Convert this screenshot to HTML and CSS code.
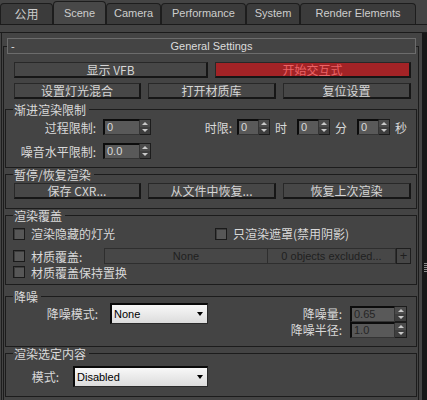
FILE: index.html
```html
<!DOCTYPE html>
<html>
<head>
<meta charset="utf-8">
<link rel="stylesheet" href="styles.css">
</head>
<body>
<div class="tabs">
  <div class="tab tab-common cjk">公用</div>
  <div class="tab tab-scene active">Scene</div>
  <div class="tab tab-camera">Camera</div>
  <div class="tab tab-perf">Performance</div>
  <div class="tab tab-system">System</div>
  <div class="tab tab-re">Render Elements</div>
</div>
<div class="panel">
  <div class="scroll">
    <div class="rollout">
      <div class="rollout-head"><span class="minus">-</span><span class="rollout-title">General Settings</span><span></span></div>
      <div class="rollout-body">
        <div class="btn-row btn-row-2">
          <div class="btn">显示 VFB</div>
          <div class="btn btn-red">开始交互式</div>
        </div>
        <div class="btn-row btn-row-3">
          <div class="btn">设置灯光混合</div>
          <div class="btn">打开材质库</div>
          <div class="btn">复位设置</div>
        </div>

        <fieldset class="group group-progressive">
          <legend>渐进渲染限制</legend>
          <div class="row">
            <span class="lbl-main">过程限制:</span>
            <div class="spin spin-pass"><span class="spin-field">0</span><span class="spin-btn"></span></div>
            <span class="lbl-time">时限:</span>
            <div class="spin spin-time"><span class="spin-field">0</span><span class="spin-btn"></span></div>
            <span class="unit">时</span>
            <div class="spin spin-time"><span class="spin-field">0</span><span class="spin-btn"></span></div>
            <span class="unit">分</span>
            <div class="spin spin-time"><span class="spin-field">0</span><span class="spin-btn"></span></div>
            <span class="unit unit-last">秒</span>
          </div>
          <div class="row">
            <span class="lbl-main">噪音水平限制:</span>
            <div class="spin spin-pass"><span class="spin-field">0.0</span><span class="spin-btn"></span></div>
          </div>
        </fieldset>

        <fieldset class="group group-pause">
          <legend>暂停/恢复渲染</legend>
          <div class="btn-row btn-row-3 in-group">
            <div class="btn">保存 CXR...</div>
            <div class="btn">从文件中恢复...</div>
            <div class="btn">恢复上次渲染</div>
          </div>
        </fieldset>

        <fieldset class="group group-override">
          <legend>渲染覆盖</legend>
          <div class="ov-row ov-row1">
            <label class="check"><span class="cb"></span><span>渲染隐藏的灯光</span></label>
            <label class="check"><span class="cb"></span><span>只渲染遮罩(禁用阴影)</span></label>
          </div>
          <div class="ov-row ov-row2">
            <label class="check"><span class="cb"></span><span class="ov-label">材质覆盖:</span></label>
            <div class="field field-none">None</div>
            <div class="field field-excl">0 objects excluded...</div>
            <div class="field field-plus">+</div>
          </div>
          <div class="ov-row">
            <label class="check"><span class="cb"></span><span>材质覆盖保持置换</span></label>
          </div>
        </fieldset>

        <fieldset class="group group-denoise">
          <legend>降噪</legend>
          <div class="denoise">
            <div class="dn-left">
              <span class="dn-label">降噪模式:</span>
              <div class="dropdown dd-denoise"><span>None</span></div>
            </div>
            <div class="dn-spins">
              <span class="dn-spin-label">降噪量:</span>
              <div class="spin spin-dn"><span class="spin-field disabled">0.65</span><span class="spin-btn"></span></div>
              <span class="dn-spin-label">降噪半径:</span>
              <div class="spin spin-dn"><span class="spin-field disabled">1.0</span><span class="spin-btn"></span></div>
            </div>
          </div>
        </fieldset>

        <fieldset class="group group-select">
          <legend>渲染选定内容</legend>
          <div class="sel-row">
            <span class="sel-label">模式:</span>
            <div class="dropdown dd-select"><span>Disabled</span></div>
          </div>
        </fieldset>
      </div>
    </div>
  </div>
  <div class="scrollbar"><div class="grip"></div></div>
</div>
</body>
</html>
```

FILE: styles.css
```css
* { box-sizing: border-box; }

body {
  margin: 0;
  width: 427px;
  height: 400px;
  overflow: hidden;
  background: #444444;
  color: #d9d9d9;
  font-family: "Noto Sans CJK SC", "Liberation Sans", sans-serif;
  font-size: 12px;
}

/* ---------- tabs ---------- */
.tabs {
  display: flex;
  align-items: flex-end;
  height: 25px;
  border-bottom: 1px solid #1b1b1b;
}
.tab {
  height: 21px;
  border: 1px solid #1d1d1d;
  border-bottom: 0;
  border-radius: 4px 4px 0 0;
  background: #3b3b3b;
  color: #cdcdcd;
  font: 11px/19px "Liberation Sans", sans-serif;
  text-align: center;
}
.tab.cjk { font: 12px/19px "Noto Sans CJK SC", sans-serif; }
.tab.active {
  height: 23px;
  padding-top: 2px;
  background: #484848;
}
.tab-common { width: 53px; }
.tab-scene { width: 53px; }
.tab-camera { width: 55px; }
.tab-perf { width: 85px; }
.tab-system { width: 54px; }
.tab-re { width: 116px; }

/* ---------- panel ---------- */
.panel {
  display: flex;
  margin-top: 7px;
  height: 368px;
  padding-left: 1px;
  border-top: 1px solid #1b1b1b;
}
.scroll {
  flex: 1;
  overflow: hidden;
  border-left: 1px solid #1e1e1e;
  padding-left: 1px;
}
.scrollbar {
  width: 5px;
  background: #171717;
}
.grip {
  width: 3px;
  height: 10px;
  margin: 230px 0 0 2px;
  background: repeating-linear-gradient(to bottom, #8a8a8a 0 1px, transparent 1px 2px);
}

/* ---------- rollout ---------- */
.rollout {
  width: 416px;
  padding-top: 5px;
}
.rollout-head {
  position: relative;
  z-index: 1;
  display: grid;
  grid-template-columns: 1fr auto 1fr;
  height: 16px;
  margin: 0 3px 0 4px;
  border: 1px solid #6c6c6c;
  background: #444444;
  color: #dcdcdc;
  font: 11px/14px "Liberation Sans", sans-serif;
}
.minus { padding-left: 3px; }
.rollout-body {
  margin-top: -8px;
  padding: 15px 0 20px;
  border: 1px solid #1c1c1c;
  border-bottom: 0;
}

/* ---------- buttons ---------- */
.btn-row {
  display: grid;
  column-gap: 7px;
  margin-left: 10px;
}
.btn-row-2 { grid-template-columns: 194px 196px; }
.btn-row-3 { grid-template-columns: 127px 128px 128px; margin-top: 5px; }
.btn-row.in-group { margin: 0 0 0 8px; }
.btn {
  height: 16px;
  border-style: solid;
  border-width: 1px 2px 2px 1px;
  border-color: #282828 #161616 #161616 #282828;
  background: #474747;
  color: #d6d6d6;
  text-align: center;
  line-height: 13px;
  white-space: nowrap;
}
.btn-red {
  background: #a32326;
  color: #ea6466;
}

/* ---------- groups ---------- */
.group {
  min-width: 0;
  margin: 0 1px;
  padding: 0;
  border: 1px solid #1c1c1c;
}
.group legend {
  margin-left: 7px;
  padding: 0 3px 0 1px;
  height: 13px;
  line-height: 13px;
  color: #dadada;
}
.group-progressive { margin-top: 4px; padding: 3px 0 8px; }
.group-pause { padding: 2px 0 9px; }
.group-override { padding: 3px 0 4px; }
.group-denoise { margin-top: 5px; padding: 0 9px 8px 0; }
.group-select { padding: 6px 0 9px; }

.row {
  display: flex;
  align-items: center;
  height: 16px;
  white-space: nowrap;
}
.row + .row { margin-top: 8px; }
.lbl-main {
  width: 90px;
  margin-right: 7px;
  text-align: right;
}
.lbl-time {
  width: 81px;
  margin-right: 5px;
  text-align: right;
}
.unit { margin: 0 10px 0 5px; }
.unit-last { margin-right: 0; }

/* ---------- spinner ---------- */
.spin {
  display: flex;
  height: 16px;
}
.spin-field {
  height: 16px;
  padding-left: 2px;
  border-style: solid;
  border-width: 2px 1px 1px 2px;
  border-color: #0c0c0c #343434 #343434 #0c0c0c;
  background: #595959;
  color: #dadada;
  font: 11px/13px "Liberation Sans", sans-serif;
}
.spin-field.disabled { color: #252525; }
.spin-btn {
  display: flex;
  flex-direction: column;
  align-items: center;
  justify-content: space-around;
  width: 11px;
  height: 16px;
  border: 1px solid #1c1c1c;
  border-left: 0;
  background: linear-gradient(to bottom, #4b4b4b 0 50%, #3e3e3e 50% 100%);
}
.spin-btn::before {
  content: "";
  border-left: 3px solid transparent;
  border-right: 3px solid transparent;
  border-bottom: 3px solid #c9c9c9;
}
.spin-btn::after {
  content: "";
  border-left: 3px solid transparent;
  border-right: 3px solid transparent;
  border-top: 3px solid #c9c9c9;
}
.spin-pass .spin-field { width: 37px; }
.spin-time .spin-field { width: 22px; }
.spin-dn .spin-field { width: 45px; }
.spin-dn .spin-btn { width: 12px; }

/* ---------- override ---------- */
.ov-row {
  display: flex;
  align-items: center;
  height: 16px;
  padding-left: 7px;
  white-space: nowrap;
}
.ov-row1 {
  display: grid;
  grid-template-columns: 202px auto;
}
.ov-row2 { margin-top: 7px; }
.check {
  display: flex;
  align-items: center;
  gap: 6px;
}
.cb {
  width: 12px;
  height: 12px;
  border: 1px solid #1a1a1a;
  background: #575757;
  box-shadow: inset 1px 1px 0 #3c3c3c;
}
.ov-label { width: 73px; }
.field {
  height: 16px;
  border: 1px solid #2e2e2e;
  background: #474747;
  color: #1f1f1f;
  font: 11px/14px "Liberation Sans", sans-serif;
  text-align: center;
}
.field-none { width: 164px; }
.field-excl { width: 128px; border-left: 0; }
.field-plus {
  width: 15px;
  border-color: #1e1e1e;
  font-size: 13px;
  line-height: 13px;
}

/* ---------- dropdown ---------- */
.dropdown {
  display: flex;
  align-items: center;
  justify-content: space-between;
  height: 21px;
  padding: 0 4px 0 2px;
  border-style: solid;
  border-width: 2px 1px 1px 2px;
  border-color: #0a0a0a #2a2a2a #2a2a2a #0a0a0a;
  background: linear-gradient(to bottom, #f8f8f8, #dcdcdc);
  color: #000;
  font: 11px "Liberation Sans", sans-serif;
}
.dropdown::after {
  content: "";
  border-left: 3px solid transparent;
  border-right: 3px solid transparent;
  border-top: 4px solid #000;
}
.dd-denoise { width: 98px; }
.dd-select { width: 135px; }

/* ---------- denoise ---------- */
.denoise {
  display: flex;
  justify-content: space-between;
  align-items: flex-start;
}
.dn-left {
  display: flex;
  align-items: center;
}
.dn-label {
  width: 92px;
  margin-right: 12px;
  text-align: right;
}
.dn-spins {
  display: grid;
  grid-template-columns: auto 57px;
  column-gap: 8px;
  margin-top: 3px;
}
.dn-spin-label {
  line-height: 16px;
  text-align: right;
}

/* ---------- select ---------- */
.sel-row {
  display: flex;
  align-items: center;
}
.sel-label {
  width: 53px;
  margin-right: 14px;
  text-align: right;
}
```
